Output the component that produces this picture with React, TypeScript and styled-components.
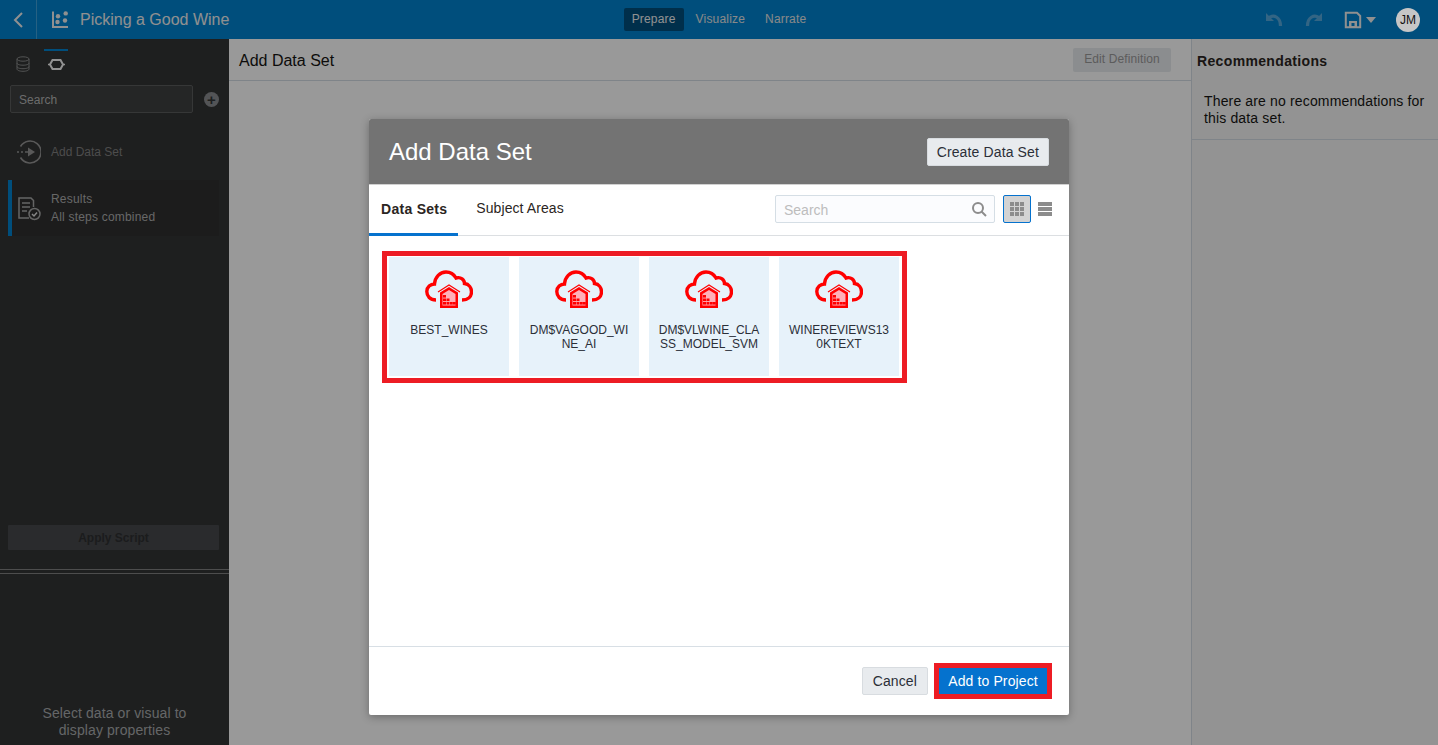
import React from "react";
import styled, { createGlobalStyle } from "styled-components";

const Global = createGlobalStyle`
  html, body { margin: 0; padding: 0; height: 100%; overflow: hidden; }
  body { font-family: "Liberation Sans", Arial, sans-serif; color: #161513; }
  * { box-sizing: border-box; }
`;

const Page = styled.div`
  position: relative;
  width: 1438px;
  height: 745px;
  display: flex;
  flex-direction: column;
  overflow: hidden;
  background: #fff;
`;

const TopBar = styled.header`
  height: 39px;
  flex: none;
  background: #0083cf;
  display: grid;
  grid-template-columns: 1fr auto 1fr;
  align-items: center;
`;
const TopLeft = styled.div`
  display: flex;
  align-items: center;
  height: 100%;
`;
const BackBox = styled.div`
  width: 37px;
  height: 100%;
  border-right: 1px solid rgba(255, 255, 255, 0.25);
  display: flex;
  align-items: center;
  justify-content: center;
  padding-right: 1px;
`;
const ProjectIcon = styled.svg`
  margin-left: 15px;
  width: 18px;
  height: 18px;
`;
const ProjectTitle = styled.div`
  margin-left: 10px;
  font-size: 16px;
  color: #f0f0f0;
`;
const NavTabs = styled.nav`
  display: flex;
  align-items: center;
  margin-left: 4px;
`;
const NavTab = styled.div<{ $active?: boolean }>`
  height: 23px;
  padding: 0 8px;
  line-height: 23px;
  border-radius: 2px;
  font-size: 12px;
  letter-spacing: 0.18px;
  color: ${(p) => (p.$active ? "#f2f2f2" : "#e4e4e4")};
  background: ${(p) => (p.$active ? "#004f7e" : "transparent")};
  margin-right: 4px;
`;
const TopRight = styled.div`
  display: flex;
  align-items: center;
  justify-content: flex-end;
  padding-right: 18px;
`;
const ToolIcon = styled.svg<{ $gap?: number }>`
  width: 18px;
  height: 18px;
  margin-left: ${(p) => p.$gap ?? 0}px;
`;
const Caret = styled.span`
  width: 0;
  height: 0;
  margin-left: 4px;
  border-left: 5px solid transparent;
  border-right: 5px solid transparent;
  border-top: 6px solid #f0f0f0;
`;
const Avatar = styled.div`
  position: relative;
  z-index: 1;
  margin-left: 20px;
  width: 24px;
  height: 24px;
  border-radius: 50%;
  background: #c6c6c6;
  color: #111;
  font-size: 12px;
  display: flex;
  align-items: center;
  justify-content: center;
`;

const Main = styled.div`
  flex: 1;
  display: flex;
  min-height: 0;
`;

const Sidebar = styled.aside`
  width: 229px;
  flex: none;
  background: #333434;
  display: flex;
  flex-direction: column;
`;
const SideTabs = styled.div`
  height: 36px;
  padding: 10px 0 0 11px;
  display: flex;
  gap: 9px;
  align-items: flex-start;
`;
const SideTab = styled.div<{ $active?: boolean }>`
  width: 24px;
  height: 26px;
  border-top: 2px solid ${(p) => (p.$active ? "#0083cf" : "transparent")};
  display: flex;
  justify-content: center;
  padding-top: ${(p) => (p.$active ? "8px" : "5px")};
`;
const SearchRow = styled.div`
  display: flex;
  align-items: center;
  padding: 10px 0 0 10px;
`;
const SideSearch = styled.div`
  width: 183px;
  height: 28px;
  background: #3e4040;
  border: 1px solid #5a5c5c;
  border-radius: 2px;
  font-size: 12px;
  letter-spacing: 0.05px;
  color: #b5b5b5;
  padding: 0 8px;
  line-height: 28px;
`;
const AddCircle = styled.div`
  margin-left: 11px;
  width: 15px;
  height: 15px;
  border-radius: 50%;
  background: #8a8c90;
  color: #333434;
  display: flex;
  align-items: center;
  justify-content: center;
  font-size: 15px;
  font-weight: bold;
  line-height: 15px;
`;
const StepAdd = styled.div`
  margin-top: 26px;
  padding-left: 17px;
  display: flex;
  align-items: center;
  height: 26px;
  font-size: 12px;
  color: #808080;
  gap: 10px;
`;
const ResultCard = styled.div`
  margin: 15px 10px 0 8px;
  height: 56px;
  background: #2f3030;
  border-left: 4px solid #0083cf;
  display: flex;
  align-items: center;
  padding: 0 0 0 6px;
  gap: 10px;
`;
const ResultIcon = styled.svg`
  width: 23px;
  height: 24px;
  margin-top: 2px;
`;
const ResultText = styled.div`
  font-size: 12px;
  line-height: 18px;
  letter-spacing: 0.2px;
  color: #adadad;
`;
const SideSpacer = styled.div`
  flex: 1;
`;
const ApplyButton = styled.div`
  margin: 0 10px 0 8px;
  height: 25px;
  background: #46484b;
  border-radius: 1px;
  font-size: 12px;
  font-weight: bold;
  color: #2e2f31;
  text-align: center;
  line-height: 26px;
`;
const Splitter = styled.div`
  margin-top: 19px;
  height: 5px;
  border-top: 1px solid #808080;
  border-bottom: 1px solid #808080;
`;
const PropsHint = styled.div`
  height: 171px;
  display: flex;
  align-items: flex-end;
  justify-content: center;
  text-align: center;
  font-size: 14px;
  letter-spacing: 0.1px;
  line-height: 17px;
  color: #a8abad;
  padding-bottom: 6px;
`;

const Center = styled.section`
  flex: 1;
  display: flex;
  flex-direction: column;
  background: #fff;
`;
const CenterHead = styled.div`
  height: 42px;
  flex: none;
  border-bottom: 1px solid #d4dde4;
  display: flex;
  align-items: center;
  justify-content: space-between;
  padding: 0 20px 0 10px;
  font-size: 16px;
`;
const HeadTitle = styled.div`
  padding-top: 2px;
`;
const EditButton = styled.div`
  width: 98px;
  height: 24px;
  background: #e8ebee;
  border-radius: 2px;
  text-align: center;
  line-height: 23px;
  font-size: 12px;
  letter-spacing: 0.1px;
  color: #9a9a9a;
`;
const RightPanel = styled.aside`
  width: 247px;
  flex: none;
  border-left: 1px solid #d4dde4;
  background: #f5f5f5;
`;
const PanelTitle = styled.div`
  padding: 14px 5px 0;
  height: 41px;
  font-size: 14px;
  font-weight: bold;
  letter-spacing: 0.35px;
  color: #2b2522;
`;
const PanelBody = styled.div`
  padding: 13px 12px 12px;
  font-size: 14px;
  letter-spacing: 0.15px;
  line-height: 17px;
  border-bottom: 1px solid #d4dde4;
`;

const Scrim = styled.div`
  position: absolute;
  inset: 0;
  background: rgba(0, 0, 0, 0.4);
`;
const Dialog = styled.div`
  position: absolute;
  left: 369px;
  top: 119px;
  width: 700px;
  height: 596px;
  background: #fff;
  display: flex;
  flex-direction: column;
  border-radius: 2px;
  box-shadow: 0 2px 8px rgba(0, 0, 0, 0.3);
`;
const DialogHead = styled.div`
  height: 66px;
  flex: none;
  background: #737373;
  border-bottom: 1px solid #d0d0d0;
  display: flex;
  align-items: center;
  justify-content: space-between;
  padding: 0 20px;
  color: #fff;
  font-size: 24px;
  border-radius: 2px 2px 0 0;
`;
const GreyButton = styled.div`
  height: 28px;
  padding: 0 9px;
  background: #e8ebee;
  border: 1px solid #d8dce0;
  border-radius: 2px;
  color: #2b2f38;
  font-size: 14px;
  letter-spacing: 0.13px;
  line-height: 26px;
`;
const TabRow = styled.div`
  height: 51px;
  flex: none;
  border-bottom: 1px solid #dcdfe2;
  display: flex;
  align-items: stretch;
  padding-right: 10px;
`;
const DlgTab = styled.div<{ $active?: boolean }>`
  padding: ${(p) => (p.$active ? "0 11px 1px 12px" : "0 12px 6px 13px")};
  margin-right: ${(p) => (p.$active ? "5px" : "0")};
  display: flex;
  align-items: center;
  height: 51px;
  font-size: 14px;
  letter-spacing: ${(p) => (p.$active ? "0.28px" : "0.08px")};
  font-weight: ${(p) => (p.$active ? "bold" : "normal")};
  color: #2b2522;
  border-bottom: ${(p) => (p.$active ? "3px solid #0572ce" : "none")};
`;
const TabTools = styled.div`
  margin-left: auto;
  display: flex;
  align-items: center;
  padding-bottom: 3px;
`;
const DlgSearch = styled.div`
  width: 220px;
  height: 28px;
  background: #fbfcfe;
  border: 1px solid #d5dee5;
  border-radius: 2px;
  display: flex;
  align-items: center;
  justify-content: space-between;
  padding: 2px 7px 0 8px;
  font-size: 14px;
  color: #bdbdbd;
`;
const ViewToggle = styled.div<{ $active?: boolean }>`
  width: 28px;
  height: 28px;
  margin-left: ${(p) => (p.$active ? "8px" : "0")};
  border-radius: 2px;
  border: 1px solid ${(p) => (p.$active ? "#0572ce" : "transparent")};
  background: ${(p) => (p.$active ? "#d3d3d3" : "transparent")};
  display: flex;
  align-items: center;
  justify-content: center;
`;
const DlgBody = styled.div`
  flex: 1;
  padding: 15px 13px;
`;
const Highlight = styled.div`
  display: inline-flex;
  gap: 10px;
  border: 5px solid #ed1c24;
  padding: 1px 3px 2px 2px;
`;
const DataCard = styled.div`
  width: 120px;
  height: 119px;
  background: #e7f2fa;
  display: flex;
  flex-direction: column;
  align-items: center;
  padding: 13px 9px 0;
  font-size: 12px;
  line-height: 14px;
  color: #2b2f38;
  text-align: center;
  word-break: break-all;
`;
const CardLabel = styled.div`
  margin-top: 15px;
`;
const DlgFoot = styled.div`
  height: 69px;
  flex: none;
  border-top: 1px solid #d8dfe5;
  display: flex;
  align-items: center;
  justify-content: flex-end;
  gap: 6px;
  padding: 0 17px 0 0;
`;
const CancelBtn = styled(GreyButton)`
  padding: 0 10px;
`;
const PrimaryOutline = styled.div`
  border: 5px solid #ed1c24;
  display: flex;
`;
const PrimaryBtn = styled.div`
  height: 26px;
  width: 108px;
  text-align: center;
  background: #0572ce;
  color: #fff;
  font-size: 14px;
  letter-spacing: 0.12px;
  line-height: 26px;
`;

const CloudIcon = () => (
  <svg width="48" height="38" viewBox="0 0 48 38" fill="none">
    <path
      d="M11 30 C5 30 1.800 26 1.800 21.500 C1.800 17 5.500 14 9.500 14 C10 7 15 2 21 2 C25.500 2 29 4.500 31 8 C36 6.500 39.500 10 39.500 13.500 C44 14 46.500 18 46.500 22 C46.500 26.500 43 30 37 30"
      stroke="#ff0000"
      strokeWidth="3.400"
    />
    <path d="M13 22 L24 15 L35 22" stroke="#ff0000" strokeWidth="1.200" />
    <path d="M15 22.500 L24 17 L33 22.500 V38 H15 Z" fill="#ff0000" />
    <path d="M17.500 24 L24 20 L30.500 24 V35.500 H17.500 Z" fill="#ffb0b8" />
    <g fill="#ff0000">
      <rect x="18" y="25" width="3" height="2.600" />
      <rect x="18" y="28.500" width="3" height="2.600" />
      <rect x="18" y="32" width="3" height="2.600" />
      <rect x="21.500" y="28.500" width="3" height="2.600" />
      <rect x="21.500" y="32" width="3" height="2.600" />
      <rect x="25" y="32" width="2.800" height="2.600" />
      <rect x="28" y="32" width="2.800" height="2.600" />
    </g>
  </svg>
);

const cards = ["BEST_WINES", "DM$VAGOOD_WINE_AI", "DM$VLWINE_CLASS_MODEL_SVM", "WINEREVIEWS130KTEXT"];

export default function App() {
  return (
    <Page>
      <Global />
      <TopBar>
        <TopLeft>
          <BackBox>
            <svg width="12" height="18" viewBox="0 0 12 18" fill="none">
              <path d="M10 2 L3 9 L10 16" stroke="#f0f0f0" strokeWidth="2" />
            </svg>
          </BackBox>
          <ProjectIcon viewBox="0 0 18 18" fill="none">
            <path d="M1 0.500 V16 H16" stroke="#f0f0f0" strokeWidth="2" />
            <circle cx="5.500" cy="11" r="2.200" fill="#f0f0f0" />
            <circle cx="6" cy="5.200" r="2.200" fill="#f0f0f0" />
            <circle cx="13" cy="9.500" r="2.200" fill="#f0f0f0" />
            <circle cx="13.700" cy="2.400" r="2.200" fill="#f0f0f0" />
          </ProjectIcon>
          <ProjectTitle>Picking a Good Wine</ProjectTitle>
        </TopLeft>
        <NavTabs>
          <NavTab $active>Prepare</NavTab>
          <NavTab>Visualize</NavTab>
          <NavTab>Narrate</NavTab>
        </NavTabs>
        <TopRight>
          <ToolIcon viewBox="0 0 18 18" fill="none">
            <path d="M1 2 V10 H9 Z" fill="#55a8dc" />
            <path d="M4 6.500 C9 3.500 15.500 6 15.500 15" stroke="#55a8dc" strokeWidth="3.200" />
          </ToolIcon>
          <ToolIcon viewBox="0 0 18 18" fill="none" $gap={22}>
            <path d="M17 2 V10 H9 Z" fill="#55a8dc" />
            <path d="M14 6.500 C9 3.500 2.500 6 2.500 15" stroke="#55a8dc" strokeWidth="3.200" />
          </ToolIcon>
          <ToolIcon viewBox="0 0 18 18" fill="none" $gap={21}>
            <path d="M1.800 1.800 H13 L16.200 5 V16.200 H1.800 Z" stroke="#f0f0f0" strokeWidth="2" />
            <rect x="5" y="10" width="8" height="6" fill="#f0f0f0" />
            <rect x="7.500" y="12" width="3" height="3" fill="#0083cf" />
          </ToolIcon>
          <Caret />
          <Avatar>JM</Avatar>
        </TopRight>
      </TopBar>
      <Main>
        <Sidebar>
          <SideTabs>
            <SideTab>
              <svg width="14" height="16" viewBox="0 0 14 16" fill="none" stroke="#8a8c8c" strokeWidth="1">
                <ellipse cx="7" cy="3" rx="6" ry="2.200" />
                <path d="M1 3 V13 C1 14.500 4 15.300 7 15.300 C10 15.300 13 14.500 13 13 V3 M1 7 C1 8.500 4 9.200 7 9.200 C10 9.200 13 8.500 13 7 M1 10.500 C1 12 4 12.700 7 12.700 C10 12.700 13 12 13 10.500" />
              </svg>
            </SideTab>
            <SideTab $active>
              <svg width="17" height="11" viewBox="0 0 17 11" fill="none" stroke="#f4f4f4" strokeWidth="2">
                <path d="M4.500 1 H12.500 L15 5.500 L12.500 10 H4.500 L2 5.500 Z" />
                <path d="M0 5.500 H2 M15 5.500 H17" strokeWidth="1.500" />
              </svg>
            </SideTab>
          </SideTabs>
          <SearchRow>
            <SideSearch>Search</SideSearch>
            <AddCircle>+</AddCircle>
          </SearchRow>
          <StepAdd>
            <svg width="24" height="24" viewBox="0 0 24 24" fill="none" stroke="#959595" strokeWidth="1.600">
              <path d="M3.500 6.500 A11 11 0 1 1 3.500 17.500" />
              <path d="M0 12 H2 M4 12 H6 M8 12 H11" strokeWidth="1.400" />
              <path d="M11 7.500 L18 12 L11 16.500 Z" fill="#959595" stroke="none" />
            </svg>
            Add Data Set
          </StepAdd>
          <ResultCard>
            <ResultIcon viewBox="0 0 23 24" fill="none" stroke="#a8a8a8" strokeWidth="1.500">
              <path d="M11 21 H1 V1 H13 L15.500 3.500 V10" />
              <path d="M4 6 H12 M4 10 H12 M4 14 H9" />
              <circle cx="16.500" cy="17" r="5.500" />
              <path d="M14 17 L16 19 L19 15.500" stroke="#e0e0e0" />
            </ResultIcon>
            <ResultText>
              Results
              <br />
              All steps combined
            </ResultText>
          </ResultCard>
          <SideSpacer />
          <ApplyButton>Apply Script</ApplyButton>
          <Splitter />
          <PropsHint>
            Select data or visual to
            <br />
            display properties
          </PropsHint>
        </Sidebar>
        <Center>
          <CenterHead>
            <HeadTitle>Add Data Set</HeadTitle>
            <EditButton>Edit Definition</EditButton>
          </CenterHead>
        </Center>
        <RightPanel>
          <PanelTitle>Recommendations</PanelTitle>
          <PanelBody>There are no recommendations for this data set.</PanelBody>
        </RightPanel>
      </Main>
      <Scrim />
      <Dialog>
        <DialogHead>
          Add Data Set
          <GreyButton>Create Data Set</GreyButton>
        </DialogHead>
        <TabRow>
          <DlgTab $active>Data Sets</DlgTab>
          <DlgTab>Subject Areas</DlgTab>
          <TabTools>
            <DlgSearch>
              Search
              <svg width="15" height="15" viewBox="0 0 15 15" fill="none" stroke="#8c8c8c" strokeWidth="2">
                <circle cx="6" cy="6" r="5" />
                <path d="M9.500 9.500 L14 14" />
              </svg>
            </DlgSearch>
            <ViewToggle $active>
              <svg width="14" height="14" viewBox="0 0 14 14" fill="#8c8c8c">
                {[0, 5, 10].flatMap((y) =>
                  [0, 5, 10].map((x) => <rect key={`${x}-${y}`} x={x} y={y} width="4" height="4" />)
                )}
              </svg>
            </ViewToggle>
            <ViewToggle>
              <svg width="14" height="14" viewBox="0 0 14 14" fill="#8c8c8c">
                <rect y="0" width="14" height="4" />
                <rect y="5" width="14" height="4" />
                <rect y="10" width="14" height="4" />
              </svg>
            </ViewToggle>
          </TabTools>
        </TabRow>
        <DlgBody>
          <Highlight>
            {cards.map((c) => (
              <DataCard key={c}>
                <CloudIcon />
                <CardLabel>{c}</CardLabel>
              </DataCard>
            ))}
          </Highlight>
        </DlgBody>
        <DlgFoot>
          <CancelBtn>Cancel</CancelBtn>
          <PrimaryOutline>
            <PrimaryBtn>Add to Project</PrimaryBtn>
          </PrimaryOutline>
        </DlgFoot>
      </Dialog>
    </Page>
  );
}
